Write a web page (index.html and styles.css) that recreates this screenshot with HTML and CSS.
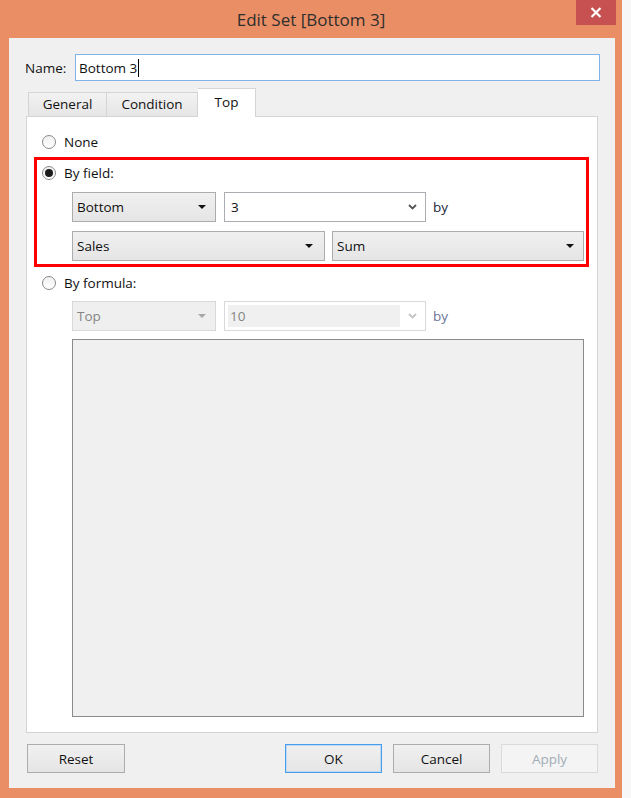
FILE: index.html
```html
<!DOCTYPE html>
<html>
<head>
<meta charset="utf-8">
<link rel="stylesheet" href="styles.css">
</head>
<body>
<div class="window">
  <div class="titlebar">
    <div class="spacer"></div>
    <div class="title">Edit Set [Bottom 3]</div>
    <div class="close">
      <svg width="12" height="11" viewBox="0 0 12 11"><path d="M1.5 1L10.5 10M10.5 1L1.5 10" stroke="#fff" stroke-width="2.2" fill="none"/></svg>
    </div>
  </div>
  <div class="client">
    <div class="name-row">
      <span class="name-label">Name:</span>
      <div class="name-input"><span>Bottom 3</span><span class="caret"></span></div>
    </div>
    <div class="tabs">
      <div class="tab tab-general">General</div>
      <div class="tab tab-condition">Condition</div>
      <div class="tab tab-top active">Top</div>
    </div>
    <div class="panel">
      <div class="option option-none"><span class="radio"></span><span>None</span></div>
      <div class="highlight">
        <div class="option"><span class="radio checked"></span><span>By field:</span></div>
        <div class="row">
          <div class="dd dd-small"><span>Bottom</span><svg class="arrow" width="8" height="4" viewBox="0 0 8 4"><path d="M0 0H8L4 4Z" fill="#111"/></svg></div>
          <div class="combo"><span>3</span><svg class="chev" width="9" height="6" viewBox="0 0 9 6"><path d="M1 1L4.5 4.5L8 1" stroke="#555" stroke-width="1.8" fill="none"/></svg></div>
          <span class="by">by</span>
        </div>
        <div class="row">
          <div class="dd dd-wide"><span>Sales</span><svg class="arrow" width="8" height="4" viewBox="0 0 8 4"><path d="M0 0H8L4 4Z" fill="#111"/></svg></div>
          <div class="dd dd-wide2"><span>Sum</span><svg class="arrow" width="8" height="4" viewBox="0 0 8 4"><path d="M0 0H8L4 4Z" fill="#111"/></svg></div>
        </div>
      </div>
      <div class="option option-formula"><span class="radio"></span><span>By formula:</span></div>
      <div class="row row-disabled">
        <div class="dd dd-small disabled"><span>Top</span><svg class="arrow" width="8" height="4" viewBox="0 0 8 4"><path d="M0 0H8L4 4Z" fill="#a6a6a6"/></svg></div>
        <div class="combo disabled"><div class="combo-field">10</div><svg class="chev" width="9" height="6" viewBox="0 0 9 6"><path d="M1 1L4.5 4.5L8 1" stroke="#c4c4c4" stroke-width="1.8" fill="none"/></svg></div>
        <span class="by by-disabled">by</span>
      </div>
      <div class="formula-box"></div>
    </div>
    <div class="buttons">
      <div class="btn btn-reset">Reset</div>
      <div class="btn btn-default">OK</div>
      <div class="btn">Cancel</div>
      <div class="btn btn-disabled">Apply</div>
    </div>
  </div>
</div>
</body>
</html>
```

FILE: styles.css
```css
html, body {
  margin: 0;
  padding: 0;
}
body {
  width: 631px;
  height: 798px;
  overflow: hidden;
  background: #f7f7f7;
  font-family: "Open Sans", "Liberation Sans", sans-serif;
  font-size: 13.5px;
  color: #111;
}
.window {
  width: 622px;
  height: 798px;
  background: #e98e65;
  display: flex;
  flex-direction: column;
}
.titlebar {
  height: 38px;
  display: grid;
  grid-template-columns: 1fr auto 1fr;
}
.title {
  font-size: 17px;
  color: #2e2e2e;
  line-height: 40px;
}
.close {
  justify-self: end;
  width: 40px;
  height: 25px;
  margin-right: 6px;
  background: #c75050;
  display: flex;
  align-items: center;
  justify-content: center;
}
.client {
  flex: 1;
  margin: 0 7px 10px 9px;
  background: #f0f0f0;
  display: flex;
  flex-direction: column;
}
.name-row {
  display: flex;
  align-items: center;
  height: 27px;
  margin-top: 16px;
  padding-left: 16px;
}
.name-label {
  width: 50px;
}
.name-input {
  width: 525px;
  height: 27px;
  box-sizing: border-box;
  border: 1px solid #7eb4ea;
  background: #fff;
  padding-left: 3px;
  display: flex;
  align-items: center;
}
.caret {
  width: 1px;
  height: 18px;
  background: #000;
  margin-left: 1px;
}
.tabs {
  display: flex;
  align-items: flex-end;
  height: 28px;
  margin: 7px 17px 0;
  padding-left: 2px;
  position: relative;
  z-index: 1;
}
.tab {
  height: 24px;
  box-sizing: border-box;
  border: 1px solid #d4d4d4;
  border-bottom: none;
  background: linear-gradient(#f2f2f2, #e6e6e6);
  text-align: center;
  line-height: 23px;
}
.tab + .tab {
  border-left: none;
}
.tab-general { width: 79px; }
.tab-condition { width: 91px; }
.tab-top { width: 58px; }
.tab.active {
  height: 29px;
  margin-bottom: -1px;
  background: #fff;
  border-left: none;
  line-height: 27px;
}
.panel {
  margin: 0 17px;
  height: 617px;
  box-sizing: border-box;
  border: 1px solid #d4d4d4;
  background: #fff;
  display: flex;
  flex-direction: column;
  padding: 15px 8px 15px 0;
}
.option {
  display: flex;
  align-items: center;
  height: 20px;
}
.option-none {
  margin-left: 15px;
}
.radio {
  width: 14px;
  height: 14px;
  box-sizing: border-box;
  border: 1px solid #8a8a8a;
  border-radius: 50%;
  background: linear-gradient(#f0f0f0, #ffffff);
  margin-right: 8px;
  display: flex;
  align-items: center;
  justify-content: center;
}
.radio.checked::after {
  content: "";
  width: 8px;
  height: 8px;
  border-radius: 50%;
  background: #1a1a1a;
}
.highlight {
  margin: 5px 0 0 7px;
  border: 3px solid #ff0000;
  padding: 3px 2px 3px 5px;
}
.row {
  display: flex;
  align-items: center;
  gap: 8px;
  height: 30px;
  margin: 9px 0 0 30px;
}
.dd {
  height: 30px;
  box-sizing: border-box;
  border: 1px solid #acacac;
  background: linear-gradient(#f0f0f0, #e5e5e5);
  display: flex;
  align-items: center;
  justify-content: space-between;
  padding: 0 9px 0 4px;
}
.dd-small { width: 144px; }
.dd-wide { width: 253px; padding-right: 11px; }
.dd-wide2 { width: 252px; margin-left: -1px; }
.combo {
  width: 202px;
  height: 30px;
  box-sizing: border-box;
  border: 1px solid #abadb3;
  background: #fff;
  display: flex;
  align-items: center;
  justify-content: space-between;
  padding: 0 8px 0 6px;
}
.by {
  margin-left: -1px;
  color: #1a1f3a;
}
.option-formula {
  margin: 6px 0 0 15px;
}
.row-disabled {
  margin: 8px 0 0 45px;
}
.dd.disabled {
  border-color: #d9d9d9;
  background: #efefef;
  color: #858585;
}
.combo.disabled {
  border-color: #d9d9d9;
  padding: 3px 8px 3px 3px;
}
.combo-field {
  width: 172px;
  height: 100%;
  background: #f0f0f0;
  color: #858585;
  display: flex;
  align-items: center;
  padding-left: 2px;
  box-sizing: border-box;
}
.by-disabled {
  color: #6d7399;
}
.formula-box {
  flex: 1;
  margin: 8px 5px 0 45px;
  border: 1px solid #8b8b8b;
  background: #f0f0f0;
}
.buttons {
  display: flex;
  gap: 11px;
  margin: 11px 17px 0 18px;
}
.btn {
  width: 97px;
  height: 29px;
  box-sizing: border-box;
  border: 1px solid #acacac;
  background: linear-gradient(#f0f0f0, #e5e5e5);
  display: flex;
  align-items: center;
  justify-content: center;
}
.btn-reset {
  width: 98px;
  margin-right: auto;
}
.btn-default {
  border-color: #4a9de8;
  box-shadow: inset 0 0 0 1px #bcd9f5;
}
.btn-disabled {
  border-color: #dadada;
  background: #f4f4f4;
  color: #a3adb8;
}
```
